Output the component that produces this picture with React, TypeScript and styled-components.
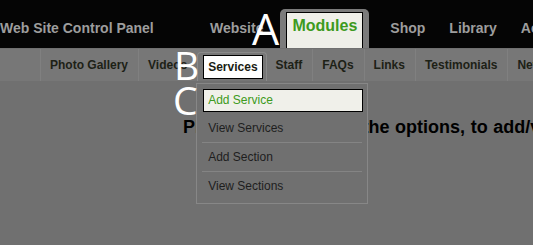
import React from 'react';
import styled, { createGlobalStyle } from 'styled-components';

const GlobalStyle = createGlobalStyle`
  html, body {
    margin: 0;
    padding: 0;
    background: #707070;
    overflow: hidden;
  }
  body {
    font-family: 'Liberation Sans', Arial, sans-serif;
  }
`;

const Page = styled.div`
  position: relative;
  width: 533px;
  height: 245px;
  overflow: hidden;
  background: #707070;
`;

const TopBar = styled.div`
  display: flex;
  align-items: flex-start;
  height: 48px;
  background: #050505;
  white-space: nowrap;
  font-size: 14px;
  font-weight: bold;
  line-height: 16px;
  color: #9d9d9d;
`;

const Brand = styled.div`
  flex: 0 0 198px;
  padding-top: 20px;
`;

const NavLink = styled.div`
  padding: 20px 12px 0;
`;

const ModTab = styled.div`
  align-self: flex-end;
  margin: 0 9px 0 5px;
  padding: 3px 6px 0;
  background: #7b7b7b;
  border-radius: 5px 5px 0 0;
`;

const ModBox = styled.div`
  box-sizing: border-box;
  height: 36px;
  padding: 4px 5px 0;
  border: 1px solid #000;
  border-bottom: none;
  background: #efefe9;
  color: #3d9a20;
  font-size: 16px;
  line-height: 18px;
`;

const SubNav = styled.div`
  display: flex;
  height: 32px;
  margin-top: 1px;
  background: #777777;
  white-space: nowrap;
  font-size: 12px;
  font-weight: bold;
  line-height: 32px;
  color: #1d2116;
`;

const Lead = styled.div`
  flex: 0 0 40px;
  border-right: 1px solid #808080;
`;

const SubLink = styled.div<{ $last?: boolean }>`
  padding: 0 10px 0 9px;
  border-right: ${p => (p.$last ? 'none' : '1px solid #808080')};
`;

const SubTab = styled.div`
  position: relative;
  align-self: flex-end;
  box-sizing: border-box;
  height: 29px;
  padding: 2px 3px 0 5px;
  border: 1px solid #8a8a8a;
  border-bottom: none;
  border-radius: 4px 4px 0 0;
  background: #767676;
`;

const SubBox = styled.div`
  height: 22px;
  padding: 0 4px;
  border: 1px solid #000;
  background: #ffffff;
  line-height: 22px;
  color: #1a1d14;
`;

const Dropdown = styled.div`
  position: absolute;
  top: 30px;
  left: -2px;
  width: 160px;
  padding: 5px 5px 2px 5px;
  border: 1px solid #878787;
  background: #707070;
  font-weight: normal;
  z-index: 2;
`;

const MenuItem = styled.div<{ $active?: boolean }>`
  box-sizing: border-box;
  height: ${p => (p.$active ? '23px' : '29px')};
  margin: ${p => (p.$active ? '0 -1px 2px 1px' : '0')};
  padding-left: ${p => (p.$active ? '4px' : '6px')};
  border: ${p => (p.$active ? '1px solid #000' : 'none')};
  border-bottom: ${p => (p.$active ? '1px solid #000' : '1px solid #848484')};
  background: ${p => (p.$active ? '#f0f0ea' : 'transparent')};
  color: ${p => (p.$active ? '#3d9a20' : '#1e1e1e')};
  font-size: 12px;
  line-height: ${p => (p.$active ? '21px' : '28px')};
  &:last-child {
    border-bottom: none;
  }
`;

const Content = styled.div`
  padding: 36px 0 0 183px;
  white-space: nowrap;
  font-size: 18px;
  font-weight: bold;
  line-height: 20px;
  word-spacing: 0.6px;
  color: #000;
`;

const Label = styled.div<{ $x: number; $y: number; $size: number }>`
  position: absolute;
  left: ${p => p.$x}px;
  top: ${p => p.$y}px;
  font-family: 'Open Sans', 'DejaVu Sans', sans-serif;
  font-size: ${p => p.$size}px;
  line-height: 1;
  color: #fff;
  z-index: 5;
`;

const topLinks = ['Shop', 'Library', 'Account'];
const subLinks = ['Staff', 'FAQs', 'Links', 'Testimonials', 'News'];
const menu = ['Add Service', 'View Services', 'Add Section', 'View Sections'];

export default function App() {
  return (
    <Page>
      <GlobalStyle />
      <TopBar>
        <Brand>Web Site Control Panel</Brand>
        <NavLink>Website</NavLink>
        <ModTab>
          <ModBox>Modules</ModBox>
        </ModTab>
        {topLinks.map(l => (
          <NavLink key={l}>{l}</NavLink>
        ))}
      </TopBar>

      <SubNav>
        <Lead />
        <SubLink>Photo Gallery</SubLink>
        <SubLink $last>Videos</SubLink>
        <SubTab>
          <SubBox>Services</SubBox>
          <Dropdown>
            {menu.map((m, i) => (
              <MenuItem key={m} $active={i === 0}>
                {m}
              </MenuItem>
            ))}
          </Dropdown>
        </SubTab>
        {subLinks.map(l => (
          <SubLink key={l}>{l}</SubLink>
        ))}
      </SubNav>

      <Content>Please select one of the options, to add/view services.</Content>

      <Label $x={252} $y={7} $size={43}>A</Label>
      <Label $x={174} $y={45} $size={39}>B</Label>
      <Label $x={173} $y={80} $size={39}>C</Label>
    </Page>
  );
}
